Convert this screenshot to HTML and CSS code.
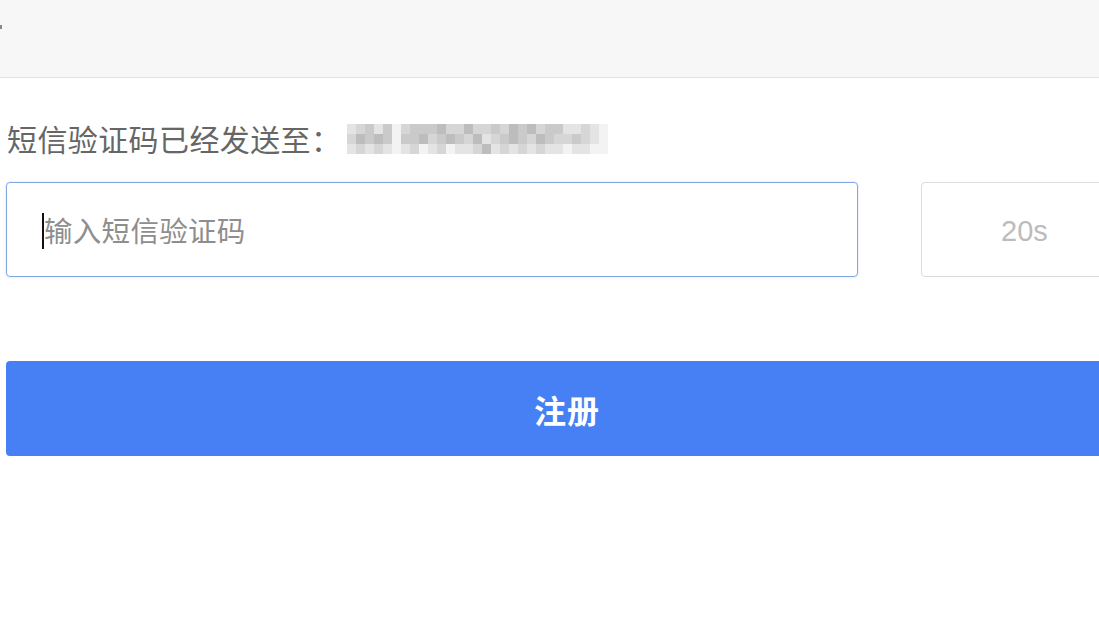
FILE: index.html
```html
<!DOCTYPE html>
<html lang="zh-CN">
<head>
<meta charset="utf-8">
<title>短信验证</title>
<link rel="stylesheet" href="styles.css">
</head>
<body>
<header class="topbar">
  <span class="back-mark"></span>
</header>
<main class="page">
  <p class="sent-to">
    <span class="sent-label">短信验证码已经发送至：</span>
    <span class="phone-blur" aria-label="手机号已隐藏">
      <i class="d"></i><i class="c"></i><i class="b"></i><i class="d"></i><i class="b"></i><i class="e"></i><i class="c"></i><i class="b"></i><i class="b"></i><i class="b"></i><i class="a"></i><i class="c"></i><i class="c"></i><i class="a"></i><i class="c"></i><i class="c"></i><i class="b"></i><i class="c"></i><i class="a"></i><i class="b"></i><i class="a"></i><i class="c"></i><i class="b"></i><i class="b"></i><i class="d"></i><i class="d"></i><i class="c"></i><i class="d"></i><i class="e"></i>
      <i class="c"></i><i class="a"></i><i class="b"></i><i class="a"></i><i class="b"></i><i class="e"></i><i class="b"></i><i class="b"></i><i class="a"></i><i class="c"></i><i class="b"></i><i class="a"></i><i class="b"></i><i class="c"></i><i class="a"></i><i class="d"></i><i class="c"></i><i class="b"></i><i class="a"></i><i class="b"></i><i class="c"></i><i class="a"></i><i class="b"></i><i class="c"></i><i class="c"></i><i class="b"></i><i class="c"></i><i class="d"></i><i class="e"></i>
      <i class="d"></i><i class="c"></i><i class="d"></i><i class="c"></i><i class="d"></i><i class="e"></i><i class="d"></i><i class="c"></i><i class="e"></i><i class="d"></i><i class="c"></i><i class="e"></i><i class="d"></i><i class="d"></i><i class="c"></i><i class="a"></i><i class="d"></i><i class="c"></i><i class="d"></i><i class="c"></i><i class="d"></i><i class="c"></i><i class="d"></i><i class="d"></i><i class="e"></i><i class="d"></i><i class="d"></i><i class="e"></i><i class="e"></i>
    </span>
  </p>
  <div class="code-row">
    <div class="code-input">
      <span class="caret"></span>
      <span class="placeholder">输入短信验证码</span>
    </div>
    <div class="countdown">20s</div>
  </div>
  <button class="submit" type="button">注册</button>
</main>
</body>
</html>
```

FILE: styles.css
```css
html, body {
  margin: 0;
  padding: 0;
  background: #ffffff;
  overflow: hidden;
}

body {
  width: 1099px;
  height: 618px;
  font-family: "Noto Sans CJK SC", "Noto Sans", sans-serif;
}

.topbar {
  position: relative;
  height: 77px;
  background: #f7f7f7;
  border-bottom: 1px solid #e3e3e3;
}

.back-mark {
  position: absolute;
  left: 0;
  top: 25px;
  width: 2px;
  height: 4px;
  background: #888;
}

.page {
  width: 1122px;
  margin-left: 6px;
}

.sent-to {
  margin: 40px 0 0 0;
  display: flex;
  align-items: center;
  height: 40px;
}

.sent-label {
  font-size: 30px;
  line-height: 40px;
  color: #666666;
  margin-left: 1px;
  letter-spacing: 0.4px;
}

.phone-blur {
  display: grid;
  grid-template-columns: repeat(29, 9px);
  grid-auto-rows: 10px;
  margin-left: 6px;
  margin-top: 2px;
}

.phone-blur i { display: block; }
.phone-blur .a { background: #bdbdbd; }
.phone-blur .b { background: #cacaca; }
.phone-blur .c { background: #d6d6d6; }
.phone-blur .d { background: #e4e4e4; }
.phone-blur .e { background: #f3f3f3; }

.code-row {
  display: flex;
  margin-top: 24px;
  gap: 63px;
}

.code-input {
  box-sizing: border-box;
  width: 852px;
  height: 95px;
  border: 1.5px solid #82a6e4;
  border-radius: 4px;
  box-shadow: 0 0 2px rgba(70, 128, 244, 0.35);
  display: flex;
  align-items: center;
  padding-left: 35px;
}

.caret {
  width: 2px;
  height: 36px;
  background: #111;
  margin-top: 2px;
}

.placeholder {
  font-size: 28.5px;
  color: #8e8e8e;
  line-height: 40px;
  letter-spacing: 0.3px;
}

.countdown {
  box-sizing: border-box;
  width: 207px;
  height: 95px;
  border: 1.5px solid #dcdcdc;
  border-radius: 4px;
  display: flex;
  align-items: center;
  justify-content: center;
  font-family: "Liberation Sans", Arial, sans-serif;
  font-size: 29px;
  color: #bcbcbc;
  padding-top: 3px;
}

.submit {
  display: block;
  box-sizing: border-box;
  width: 1122px;
  height: 95px;
  margin-top: 84px;
  border: none;
  border-radius: 4px;
  background: #4680f4;
  color: #ffffff;
  font-family: "Noto Sans CJK SC", "Noto Sans", sans-serif;
  font-size: 32px;
  font-weight: 700;
  letter-spacing: 1px;
}
```
